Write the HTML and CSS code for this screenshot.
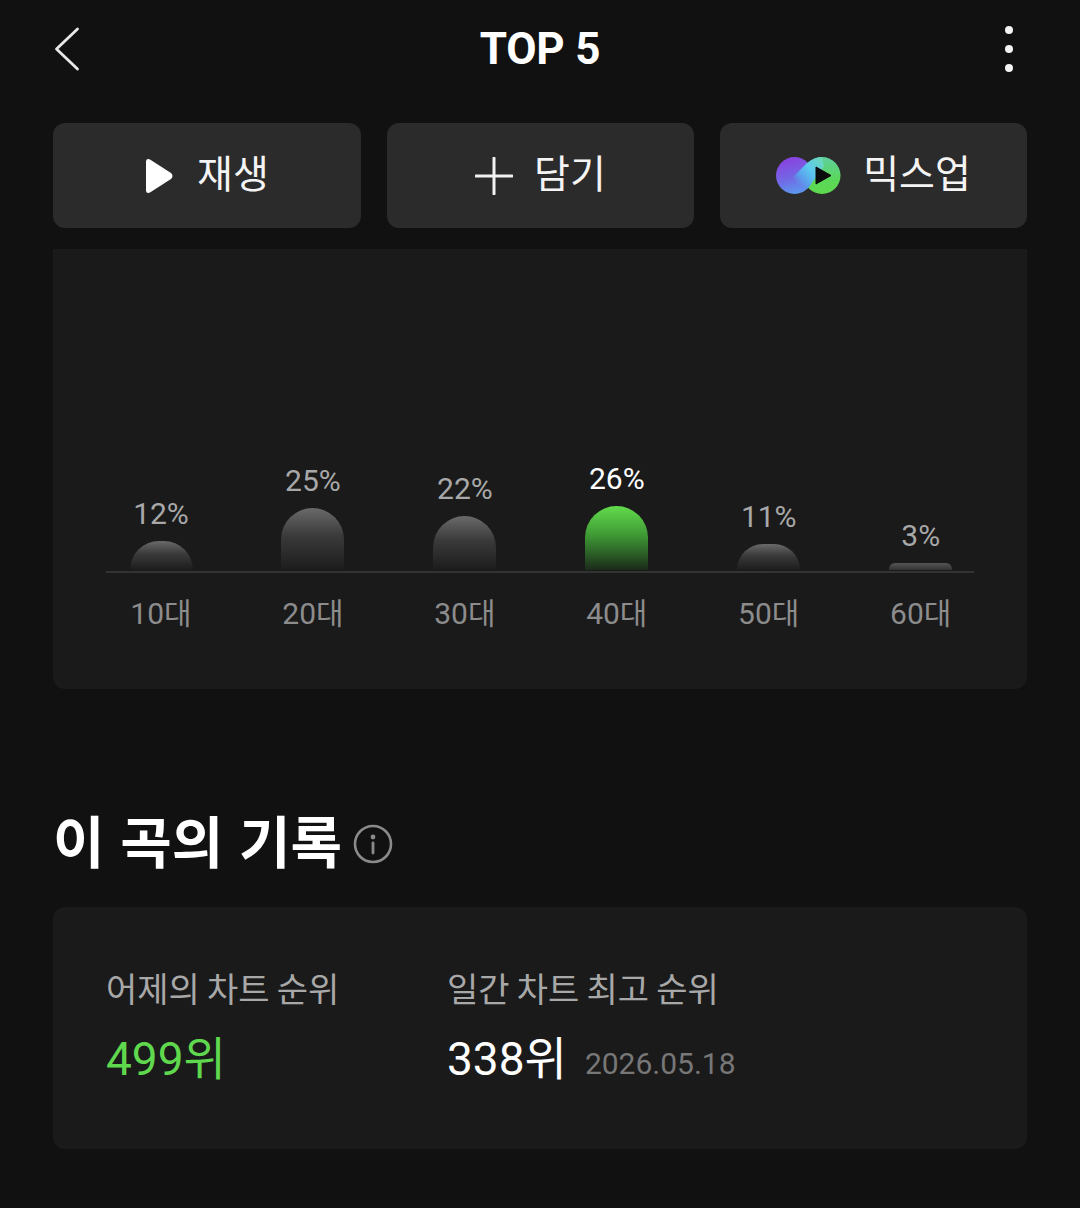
FILE: index.html
```html
<!DOCTYPE html>
<html lang="ko">
<head>
<meta charset="utf-8">
<title>TOP 5</title>
<link rel="stylesheet" href="styles.css">
</head>
<body>
<div class="page">
  <header class="top">
    <svg class="back" width="26" height="44" viewBox="0 0 26 44"><path d="M23.5 2 L2.5 22 L23.5 42" fill="none" stroke="#e8e8e8" stroke-width="2.8" stroke-linecap="round" stroke-linejoin="round"/></svg>
    <h1 class="title">TOP 5</h1>
    <div class="more"><i></i><i></i><i></i></div>
  </header>

  <div class="actions">
    <button class="btn">
      <svg class="ic-play" width="28" height="36" viewBox="0 0 28 36"><path d="M5 1.5 L26 15 Q29 18 26 21 L5 34.5 Q1 36 1 32 L1 4 Q1 0 5 1.5 Z" fill="#fff"/></svg>
      <span>재생</span>
    </button>
    <button class="btn">
      <svg class="ic-plus" width="38" height="38" viewBox="0 0 38 38"><path d="M19 1 V37 M1 19 H37" stroke="#f2f2f2" stroke-width="3" stroke-linecap="round" fill="none"/></svg>
      <span>담기</span>
    </button>
    <button class="btn">
      <svg class="ic-mix" width="65" height="37" viewBox="0 0 65 37">
        <defs>
          <linearGradient id="gp" x1="0.3" y1="0" x2="0.6" y2="1"><stop offset="0" stop-color="#8b3fe0"/><stop offset="0.55" stop-color="#7268e4"/><stop offset="1" stop-color="#5a9cf0"/></linearGradient>
          <linearGradient id="gg" x1="0.5" y1="0" x2="0.5" y2="1"><stop offset="0" stop-color="#5fcf9f"/><stop offset="0.6" stop-color="#5ad85a"/><stop offset="1" stop-color="#5fd84e"/></linearGradient>
          <linearGradient id="gr" x1="0" y1="1" x2="1" y2="0"><stop offset="0.12" stop-color="#6c7ae6" stop-opacity="0"/><stop offset="0.35" stop-color="#5a9cec"/><stop offset="0.6" stop-color="#5cc8f0"/><stop offset="1" stop-color="#6fdcae"/></linearGradient>
        </defs>
        <circle cx="46" cy="18.5" r="18.5" fill="url(#gg)"/>
        <circle cx="18.5" cy="18.5" r="18.5" fill="url(#gp)"/>
        <path d="M17 20 L31 6 Q38 0 46 0 L48 9 L35 27 Q28 37 18.5 37 Q25 29 17 20 Z" fill="url(#gr)"/>
        <path d="M40 10 L55 18.5 L40 27 Z" fill="#0b0b0b" stroke="#0b0b0b" stroke-width="1" stroke-linejoin="round"/>
      </svg>
      <span>믹스업</span>
    </button>
  </div>

  <section class="chart">
    <div class="plot">
      <div class="col"><span class="pct">12%</span><div class="bar" style="height:29px"></div></div>
      <div class="col"><span class="pct">25%</span><div class="bar" style="height:62px"></div></div>
      <div class="col"><span class="pct">22%</span><div class="bar" style="height:54px"></div></div>
      <div class="col col-on"><span class="pct">26%</span><div class="bar" style="height:64px"></div></div>
      <div class="col"><span class="pct">11%</span><div class="bar" style="height:26px"></div></div>
      <div class="col"><span class="pct">3%</span><div class="bar bar-low" style="height:7px"></div></div>
    </div>
    <div class="ages">
      <span>10대</span><span>20대</span><span>30대</span><span>40대</span><span>50대</span><span>60대</span>
    </div>
  </section>

  <div class="rec-head">
    <h2 class="rec-title">이 곡의 기록</h2>
    <svg class="ic-info" width="40" height="40" viewBox="0 0 40 40"><circle cx="20" cy="20" r="18" fill="none" stroke="#8a8a8a" stroke-width="2.6"/><circle cx="20" cy="13" r="2.4" fill="#8a8a8a"/><path d="M20 19 V29" stroke="#8a8a8a" stroke-width="2.8" stroke-linecap="round"/></svg>
  </div>

  <section class="rec">
    <div class="stat stat-a">
      <div class="lab">어제의 차트 순위</div>
      <div class="val green">499위</div>
    </div>
    <div class="stat">
      <div class="lab">일간 차트 최고 순위</div>
      <div class="val">338위<span class="date">2026.05.18</span></div>
    </div>
  </section>
</div>
</body>
</html>
```

FILE: styles.css
```css
* { box-sizing: border-box; margin: 0; padding: 0; }
html, body { background: #111112; }
body { font-family: Roboto, "Noto Sans CJK KR", sans-serif; color: #fff; width: 1080px; height: 1208px; overflow: hidden; }
.page { padding: 0 53px; }

.top { height: 98px; display: flex; align-items: center; justify-content: space-between; position: relative; }
.back { margin-left: 1px; }
.title { font-size: 44px; font-weight: 700; line-height: 98px; position: absolute; left: 0; right: 0; text-align: center; letter-spacing: -0.2px; }
.more { display: flex; flex-direction: column; gap: 11px; margin-right: 14px; }
.more i { display: block; width: 8px; height: 8px; border-radius: 50%; background: #f4f4f4; }

.actions { margin-top: 25px; display: grid; grid-template-columns: 308px 307px 307px; gap: 26px; }
.btn { height: 105px; border: 0; border-radius: 12px; background: #2b2b2b; color: #f4f4f4; display: flex; align-items: center; justify-content: center; font-family: "Noto Sans CJK KR", sans-serif; font-size: 39px; font-weight: 400; line-height: 1; }
.btn span { position: relative; top: -4px; }
.ic-play { margin-right: 24px; }
.ic-plus { margin-right: 21px; }
.ic-mix { margin-right: 22px; }

.chart { margin-top: 21px; height: 440px; background: #1a1a1b; border-radius: 0 0 12px 12px; padding: 0 53px; display: flex; flex-direction: column; justify-content: flex-start; }
.plot { height: 324px; display: flex; gap: 41.95px; align-items: flex-end; border-bottom: 2px solid #333; padding-bottom: 1px; width: 868px; }
.col { flex: 0 0 110px; display: flex; flex-direction: column; align-items: center; }
.pct { font-size: 30px; line-height: 36px; color: #a8a8a8; margin-bottom: 9px; }
.col-on .pct { color: #fff; }
.bar { width: 63px; border-radius: 32px 32px 0 0; background: linear-gradient(to bottom, #6a6a6a 0%, #3a3a3a 45%, #1c1c1d 100%); }
.bar-low { border-radius: 6px 6px 0 0; background: linear-gradient(to bottom, #555, #333); }
.col-on .bar { background: linear-gradient(to bottom, #62dc4c 0%, #3f9a35 45%, #1b2b1a 100%); }
.ages { display: flex; gap: 41.95px; margin-top: 23px; width: 868px; }
.ages span { flex: 0 0 110px; text-align: center; font-size: 30px; line-height: 36px; color: #8c8c8c; font-weight: 400; }

.rec-head { margin-top: 114px; height: 78px; display: flex; align-items: center; }
.rec-title { font-family: "Noto Sans CJK KR", sans-serif; font-size: 56px; font-weight: 700; line-height: 78px; position: relative; top: -3px; }
.ic-info { margin-left: 11px; margin-top: 4px; }

.rec { margin-top: 26px; height: 242px; background: #1a1a1b; border-radius: 12px; padding: 57px 53px 0; display: flex; }
.stat-a { width: 341px; }
.lab { font-family: "Noto Sans CJK KR", sans-serif; font-size: 34px; font-weight: 400; line-height: 48px; color: #a8a8a8; white-space: nowrap; word-spacing: -2.3px; }
.val { font-size: 46px; line-height: 60px; margin-top: 17px; color: #fff; display: flex; align-items: baseline; }
.val.green { color: #5fd84e; }
.date { font-size: 30px; color: #777; margin-left: 18px; position: relative; top: -1px; }
```
